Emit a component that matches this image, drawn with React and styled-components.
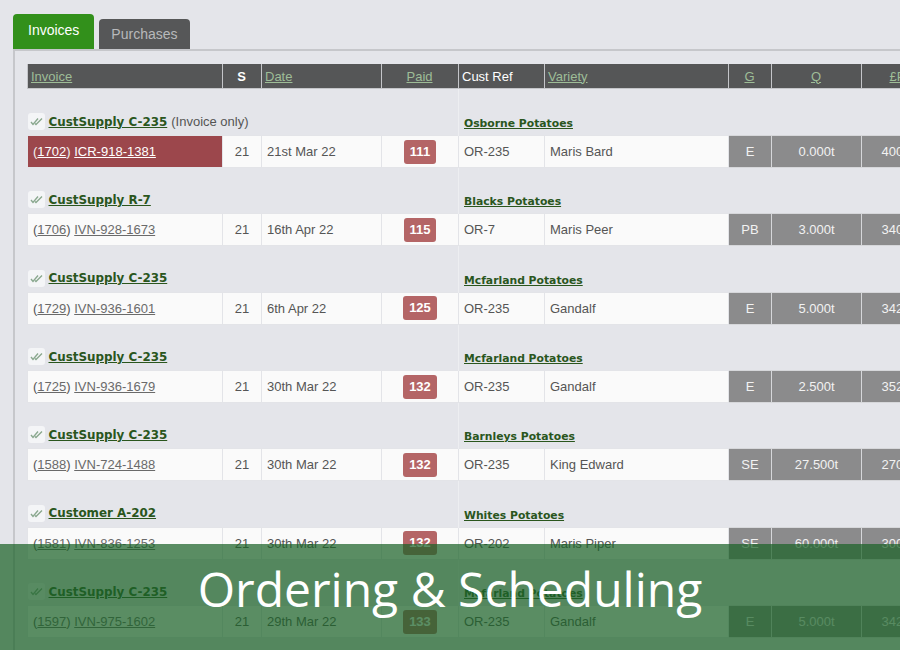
import React from "react";
import styled, { createGlobalStyle } from "styled-components";

const GlobalStyle = createGlobalStyle`
  body {
    margin: 0;
    background: #e4e5ea;
    font-family: "Liberation Sans", Arial, sans-serif;
    overflow: hidden;
  }
`;

const Page = styled.div`
  position: relative;
  width: 900px;
  height: 650px;
  overflow: hidden;
  padding: 14px 0 0 13px;
  box-sizing: border-box;
`;

const Tabs = styled.div`
  display: flex;
  align-items: flex-end;
  gap: 5px;
  height: 35px;
`;

const Tab = styled.div`
  height: ${(p) => (p.$active ? "35px" : "30px")};
  padding: ${(p) => (p.$active ? "0 15px" : "0 12px")};
  box-sizing: border-box;
  display: flex;
  align-items: center;
  justify-content: center;
  font-size: 14px;
  border-radius: 4px 4px 0 0;
  background: ${(p) => (p.$active ? "#32901b" : "#565758")};
  color: ${(p) => (p.$active ? "#ffffff" : "#b8b9bb")};
  padding-bottom: ${(p) => (p.$active ? "4px" : "0")};
`;

const Panel = styled.div`
  border-top: 2px solid #c6c7cb;
  border-left: 2px solid #c6c7cb;
  padding: 13px 0 0 12px;
  height: 620px;
`;

const Table = styled.table`
  border-collapse: collapse;
  table-layout: fixed;
  width: 914px;
  font-size: 13px;
`;

const Th = styled.th`
  height: 24px;
  background: #555657;
  color: #ffffff;
  font-weight: ${(p) => (p.$bold ? "bold" : "normal")};
  text-align: ${(p) => p.$align || "left"};
  padding: 0 4px 0 3px;
  border: 1px solid #c4c5c9;
  border-top: none;
  white-space: nowrap;
`;

const HeadLink = styled.a`
  color: #9ebd97;
  text-decoration: underline;
`;

const GroupRow = styled.tr`
  height: ${(p) => (p.$first ? "47px" : "46.35px")};
`;

const GroupCell = styled.td`
  vertical-align: bottom;
  padding: 0 0 5px 0;
  border-left: ${(p) => (p.$line ? "1px solid #edeef1" : "none")};
  padding-left: ${(p) => (p.$line ? "5px" : "0")};
  white-space: nowrap;
`;

const GroupLine = styled.div`
  display: flex;
  align-items: center;
  gap: 4px;
`;

const CheckBox = styled.span`
  display: inline-flex;
  align-items: center;
  justify-content: center;
  width: 17px;
  height: 17px;
  background: #f4f5f7;
  border-radius: 3px;
`;

const BoldLink = styled.a`
  font-family: "DejaVu Sans", Verdana, sans-serif;
  font-weight: bold;
  font-size: ${(p) => (p.$small ? "10.8px" : "11.9px")};
  color: #2a561d;
  text-decoration: underline;
`;

const Note = styled.span`
  color: #555;
  font-size: 13px;
`;

const DataRow = styled.tr`
  height: 32px;
`;

const Td = styled.td`
  background: ${(p) => (p.$red ? "#9c474c" : p.$grey ? "#8b8b8c" : "#fafafa")};
  color: ${(p) => (p.$red || p.$grey ? "#f2f2f2" : "#555")};
  text-align: ${(p) => p.$align || "left"};
  padding: 0 5px;
  border: 1px solid ${(p) => (p.$grey ? "#d6d7da" : "#e3e4e8")};
  white-space: nowrap;
  overflow: hidden;
`;

const RowLink = styled.a`
  color: ${(p) => (p.$light ? "#ffffff" : "#6a6a6a")};
  text-decoration: underline;
`;

const Badge = styled.span`
  display: inline-block;
  background: #b46566;
  color: #ffffff;
  font-weight: bold;
  border-radius: 3px;
  height: 24px;
  line-height: 24px;
  padding: 0 6px;
`;

const Overlay = styled.div`
  position: absolute;
  left: 0;
  right: 0;
  bottom: 0;
  height: 106px;
  background: rgba(28, 98, 40, 0.72);
  display: flex;
  align-items: center;
  justify-content: center;
  color: #ffffff;
  font-family: "Open Sans", "Noto Sans", sans-serif;
  font-size: 48px;
  padding-bottom: 18px;
  box-sizing: border-box;
`;

const DoubleCheck = () => (
  <svg width="13" height="9" viewBox="0 0 13 9">
    <polyline points="1,5 3,7.5 8,1.5" fill="none" stroke="#8aa88f" strokeWidth="1.4" />
    <polyline points="5,6.5 6,7.5 12,1.5" fill="none" stroke="#8aa88f" strokeWidth="1.4" />
  </svg>
);

const rows = [
  { cust: "CustSupply C-235", note: "(Invoice only)", grower: "Osborne Potatoes", id: "1702", inv: "ICR-918-1381", s: "21", date: "21st Mar 22", paid: "111", ref: "OR-235", variety: "Maris Bard", g: "E", q: "0.000t", p: "400.00", red: true },
  { cust: "CustSupply R-7", grower: "Blacks Potatoes", id: "1706", inv: "IVN-928-1673", s: "21", date: "16th Apr 22", paid: "115", ref: "OR-7", variety: "Maris Peer", g: "PB", q: "3.000t", p: "340.00" },
  { cust: "CustSupply C-235", grower: "Mcfarland Potatoes", id: "1729", inv: "IVN-936-1601", s: "21", date: "6th Apr 22", paid: "125", ref: "OR-235", variety: "Gandalf", g: "E", q: "5.000t", p: "342.00" },
  { cust: "CustSupply C-235", grower: "Mcfarland Potatoes", id: "1725", inv: "IVN-936-1679", s: "21", date: "30th Mar 22", paid: "132", ref: "OR-235", variety: "Gandalf", g: "E", q: "2.500t", p: "352.00" },
  { cust: "CustSupply C-235", grower: "Barnleys Potatoes", id: "1588", inv: "IVN-724-1488", s: "21", date: "30th Mar 22", paid: "132", ref: "OR-235", variety: "King Edward", g: "SE", q: "27.500t", p: "270.00" },
  { cust: "Customer A-202", grower: "Whites Potatoes", id: "1581", inv: "IVN-836-1253", s: "21", date: "30th Mar 22", paid: "132", ref: "OR-202", variety: "Maris Piper", g: "SE", q: "60.000t", p: "300.00" },
  { cust: "CustSupply C-235", grower: "Mcfarland Potatoes", id: "1597", inv: "IVN-975-1602", s: "21", date: "29th Mar 22", paid: "133", ref: "OR-235", variety: "Gandalf", g: "E", q: "5.000t", p: "342.00" },
];

export default function App() {
  return (
    <Page>
      <GlobalStyle />
      <Tabs>
        <Tab $active>Invoices</Tab>
        <Tab>Purchases</Tab>
      </Tabs>
      <Panel>
        <Table>
          <colgroup>
            <col style={{ width: 195 }} />
            <col style={{ width: 39 }} />
            <col style={{ width: 120 }} />
            <col style={{ width: 77 }} />
            <col style={{ width: 86 }} />
            <col style={{ width: 184 }} />
            <col style={{ width: 43 }} />
            <col style={{ width: 90 }} />
            <col style={{ width: 80 }} />
          </colgroup>
          <thead>
            <tr>
              <Th><HeadLink>Invoice</HeadLink></Th>
              <Th $align="center" $bold>S</Th>
              <Th><HeadLink>Date</HeadLink></Th>
              <Th $align="center"><HeadLink>Paid</HeadLink></Th>
              <Th>Cust Ref</Th>
              <Th><HeadLink>Variety</HeadLink></Th>
              <Th $align="center"><HeadLink>G</HeadLink></Th>
              <Th $align="center"><HeadLink>Q</HeadLink></Th>
              <Th $align="center"><HeadLink>£P/t</HeadLink></Th>
            </tr>
          </thead>
          <tbody>
            {rows.map((r, i) => (
              <React.Fragment key={i}>
                <GroupRow $first={i === 0}>
                  <GroupCell colSpan={4}>
                    <GroupLine>
                      <CheckBox><DoubleCheck /></CheckBox>
                      <BoldLink>{r.cust}</BoldLink>
                      {r.note && <Note>{r.note}</Note>}
                    </GroupLine>
                  </GroupCell>
                  <GroupCell colSpan={2} $line>
                    <BoldLink $small>{r.grower}</BoldLink>
                  </GroupCell>
                  <GroupCell colSpan={3} />
                </GroupRow>
                <DataRow>
                  <Td $red={r.red}>
                    (<RowLink $light={r.red}>{r.id}</RowLink>) <RowLink $light={r.red}>{r.inv}</RowLink>
                  </Td>
                  <Td $align="center">{r.s}</Td>
                  <Td>{r.date}</Td>
                  <Td $align="center"><Badge>{r.paid}</Badge></Td>
                  <Td>{r.ref}</Td>
                  <Td>{r.variety}</Td>
                  <Td $grey $align="center">{r.g}</Td>
                  <Td $grey $align="center">{r.q}</Td>
                  <Td $grey $align="center">{r.p}</Td>
                </DataRow>
              </React.Fragment>
            ))}
          </tbody>
        </Table>
      </Panel>
      <Overlay>Ordering &amp; Scheduling</Overlay>
    </Page>
  );
}
